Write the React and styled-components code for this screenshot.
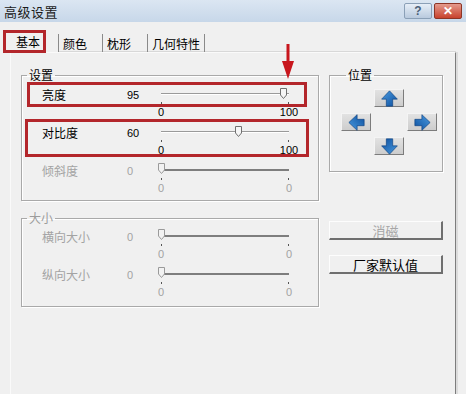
import React from 'react';
import styled, { createGlobalStyle, css } from 'styled-components';

const GlobalStyle = createGlobalStyle`
  html, body { margin: 0; padding: 0; background: #f0f0f0; }
  body { font-family: "Liberation Sans", "Noto Sans CJK SC", sans-serif; }
`;

const RED = '#b3262b';

// ------------------------------------------------------------------
// window chrome
// ------------------------------------------------------------------

const Window = styled.div`
  position: relative;
  width: 466px;
  height: 394px;
  overflow: hidden;
  background: #f0f0f0;
  font-size: 12px;
  color: #000;
`;

const TitleBar = styled.div`
  display: flex;
  align-items: center;
  justify-content: space-between;
  height: 22px;
  padding: 0 4px;
  box-sizing: border-box;
  background: linear-gradient(#dbe6f2, #c7d7e9);
`;

const Title = styled.div`
  font-size: 13px;
  color: #1b1b1b;
  letter-spacing: 0.5px;
`;

const Caption = styled.div`
  display: flex;
  gap: 2px;
`;

const CaptionButton = styled.div`
  display: flex;
  align-items: center;
  justify-content: center;
  width: 28px;
  height: 16px;
  box-sizing: border-box;
  border-radius: 2px;
  font-size: 12px;
  font-weight: bold;
  ${p =>
    p.$close
      ? css`
          background: linear-gradient(#e49a8c, #c8422d);
          border: 1px solid #8d3526;
          color: #fff;
        `
      : css`
          background: linear-gradient(#e6eef7, #b9cade);
          border: 1px solid #8ba0b7;
          color: #4b5f78;
        `};
`;

const Body = styled.div`
  padding: 8px 0 0 10px;
  border-left: 3px solid #dfe9f4;
  margin-left: -3px;
`;

// ------------------------------------------------------------------
// tabs
// ------------------------------------------------------------------

const TabStrip = styled.div`
  display: flex;
  height: 22px;
  margin-left: -6px;
  align-items: flex-end;
`;

const Tab = styled.div`
  display: flex;
  align-items: center;
  box-sizing: border-box;
  height: ${p => (p.$active ? 22 : 18)}px;
  width: ${p => p.$width}px;
  padding-left: ${p => (p.$active ? 12 : 4)}px;
  font-family: "Noto Sans CJK SC", sans-serif;
  font-size: 12px;
  ${p =>
    p.$active
      ? css`
          background: #f0f0f0;
        `
      : css`
          border-left: 1px solid #8a8a8a;
          &:last-child {
            border-right: 1px solid #8a8a8a;
          }
        `};
`;

const TabPage = styled.div`
  display: flex;
  gap: 10px;
  width: 446px;
  height: 360px;
  box-sizing: border-box;
  padding: 15px 0 0 10px;
  border-top: 1px solid #fafafa;
  border-left: 1px solid #fafafa;
  border-right: 1px solid #7d7d7d;
  box-shadow: 2px 0 0 #dcdcdc, 0 -1px 0 #d8d8d8;
`;

const Column = styled.div`
  display: flex;
  flex-direction: column;
  width: ${p => p.$width}px;
`;

// ------------------------------------------------------------------
// group boxes
// ------------------------------------------------------------------

const Group = styled.fieldset`
  margin: ${p => p.$top || 0}px 0 0 0;
  padding: ${p => p.$pad};
  min-width: 0;
  border: 1px solid #a9a9a9;
  box-shadow: inset 1px 1px 0 #fff, 1px 1px 0 #fff;
`;

const Legend = styled.legend`
  margin-left: 5px;
  padding: 0 2px;
  line-height: 14px;
  font-family: "Noto Sans CJK SC", sans-serif;
  font-size: 12px;
  color: ${p => (p.$disabled ? '#9c9c9c' : '#000')};
`;

const Row = styled.div`
  display: grid;
  grid-template-columns: 85px 31px 138px;
  height: 38px;
  padding-left: 20px;
  color: ${p => (p.$disabled ? '#a3a3a3' : '#000')};
`;

const Label = styled.div`
  padding-top: 5px;
  line-height: 14px;
  font-family: "Noto Sans CJK SC", sans-serif;
  font-size: 12px;
`;

const Value = styled.div`
  padding-top: 5px;
  line-height: 14px;
  font-size: 11px;
`;

// ------------------------------------------------------------------
// slider
// ------------------------------------------------------------------

const SliderBox = styled.div`
  padding: 0 7px 0 3px;
`;

const Track = styled.div`
  position: relative;
  margin-top: 10px;
  height: 2px;
  ${p =>
    p.$disabled
      ? css`
          background: #7e7e7e;
        `
      : css`
          border-top: 1px solid #9a9a9a;
          border-bottom: 1px solid #ffffff;
          height: 0;
        `};
`;

const Thumb = styled.svg`
  position: absolute;
  top: -6px;
  margin-left: -3px;
`;

const Ticks = styled.div`
  display: flex;
  justify-content: space-between;
  margin-top: 7px;
  height: 2px;
`;

const Tick = styled.div`
  width: 1px;
  height: 2px;
  background: #555;
`;

const TickLabels = styled.div`
  display: flex;
  justify-content: space-between;
  margin: 2px -10px 0;
  line-height: 12px;
  font-size: 11px;

  span {
    width: 20px;
    text-align: center;
  }
`;

const Slider = ({ value, max, disabled }) => {
  const pos = max ? (value / max) * 128 : 0;
  return (
    <SliderBox>
      <Track $disabled={disabled}>
        <Thumb width="7" height="11" style={{ left: `${pos}px` }}>
          <path
            d="M0.5 0.5H6.5V7L3.5 10.5L0.5 7Z"
            fill={disabled ? '#f2f2f2' : '#f6f6f6'}
            stroke={disabled ? '#9a9a9a' : '#707070'}
          />
        </Thumb>
      </Track>
      <Ticks>
        <Tick />
        <Tick />
      </Ticks>
      <TickLabels>
        <span>0</span>
        <span>{max}</span>
      </TickLabels>
    </SliderBox>
  );
};

const SliderRow = ({ label, value, max, disabled }) => (
  <Row $disabled={disabled}>
    <Label>{label}</Label>
    <Value>{value}</Value>
    <Slider value={value} max={max} disabled={disabled} />
  </Row>
);

// ------------------------------------------------------------------
// position pad & buttons
// ------------------------------------------------------------------

const Pad = styled.div`
  display: grid;
  grid-template-columns: repeat(3, 30px);
  grid-template-rows: repeat(3, 18px);
  column-gap: 3px;
  row-gap: 6px;
`;

const PadButton = styled.div`
  grid-column: ${p => p.$col};
  grid-row: ${p => p.$row};
  display: flex;
  align-items: center;
  justify-content: center;
  box-sizing: border-box;
  background: linear-gradient(#e2e2e2, #cdcdcd);
  border-top: 1px solid #f4f4f4;
  border-left: 1px solid #f4f4f4;
  border-right: 1px solid #7c7c7c;
  border-bottom: 1px solid #7c7c7c;
`;

const arrowRot = { up: 0, right: 90, down: 180, left: 270 };

const BlockArrow = ({ dir }) => (
  <svg width="17" height="17" viewBox="0 0 16 16" style={{ transform: `rotate(${arrowRot[dir]}deg)` }}>
    <defs>
      <linearGradient id={`g-${dir}`} x1="0" y1="0" x2="1" y2="1">
        <stop offset="0" stopColor="#4a9be0" />
        <stop offset="1" stopColor="#0d4f9e" />
      </linearGradient>
    </defs>
    <path d="M8 0.8L15.4 8.6H11V15.2H5V8.6H0.6Z" fill={`url(#g-${dir})`} stroke="#0b3f7e" strokeWidth="0.6" />
  </svg>
);

const PushButton = styled.div`
  display: flex;
  align-items: center;
  justify-content: center;
  margin-top: ${p => p.$top}px;
  height: 19px;
  box-sizing: border-box;
  background: #f0f0f0;
  border-top: 1px solid #fdfdfd;
  border-left: 1px solid #fdfdfd;
  border-right: 2px solid #6f6f6f;
  border-bottom: 2px solid #6f6f6f;
  font-family: "Noto Sans CJK SC", sans-serif;
  font-size: 13px;
  color: ${p => (p.$disabled ? '#a6a6a6' : '#000')};
`;

// ------------------------------------------------------------------
// red annotation overlays
// ------------------------------------------------------------------

const Highlight = styled.div`
  position: absolute;
  box-sizing: border-box;
  border: 3px solid ${RED};
  left: ${p => p.$x}px;
  top: ${p => p.$y}px;
  width: ${p => p.$w}px;
  height: ${p => p.$h}px;
`;

const Pointer = styled.svg`
  position: absolute;
  left: 281px;
  top: 44px;
`;

const App = () => (
  <Window>
    <GlobalStyle />
    <TitleBar>
      <Title>高级设置</Title>
      <Caption>
        <CaptionButton>?</CaptionButton>
        <CaptionButton $close>✕</CaptionButton>
      </Caption>
    </TitleBar>
    <Body>
      <TabStrip>
        <Tab $active $width={54}>基本</Tab>
        <Tab $width={44}>颜色</Tab>
        <Tab $width={45}>枕形</Tab>
        <Tab $width={58}>几何特性</Tab>
      </TabStrip>
      <TabPage>
        <Column $width={298}>
          <Group $pad="1px 0 3px 0">
            <Legend>设置</Legend>
            <SliderRow label="亮度" value={95} max={100} />
            <SliderRow label="对比度" value={60} max={100} />
            <SliderRow label="倾斜度" value={0} max={0} disabled />
          </Group>
          <Group $top={10} $pad="0 0 5px 0">
            <Legend $disabled>大小</Legend>
            <SliderRow label="横向大小" value={0} max={0} disabled />
            <SliderRow label="纵向大小" value={0} max={0} disabled />
          </Group>
        </Column>
        <Column $width={114}>
          <Group $pad="7px 0 16px 11px">
            <Legend>位置</Legend>
            <Pad>
              <PadButton $col={2} $row={1}><BlockArrow dir="up" /></PadButton>
              <PadButton $col={1} $row={2}><BlockArrow dir="left" /></PadButton>
              <PadButton $col={3} $row={2}><BlockArrow dir="right" /></PadButton>
              <PadButton $col={2} $row={3}><BlockArrow dir="down" /></PadButton>
            </Pad>
          </Group>
          <PushButton $top={49} $disabled>消磁</PushButton>
          <PushButton $top={15}>厂家默认值</PushButton>
        </Column>
      </TabPage>
    </Body>

    <Highlight $x={3} $y={30} $w={43} $h={23} />
    <Highlight $x={27} $y={82} $w={280} $h={25} />
    <Highlight $x={25} $y={119} $w={284} $h={38} />
    <Pointer width="14" height="36" viewBox="0 0 14 36">
      <rect x="5.5" y="0" width="3" height="20" fill="#c8161d" />
      <path d="M1 17H13L7 35Z" fill="#c8161d" />
    </Pointer>
  </Window>
);

export default App;
